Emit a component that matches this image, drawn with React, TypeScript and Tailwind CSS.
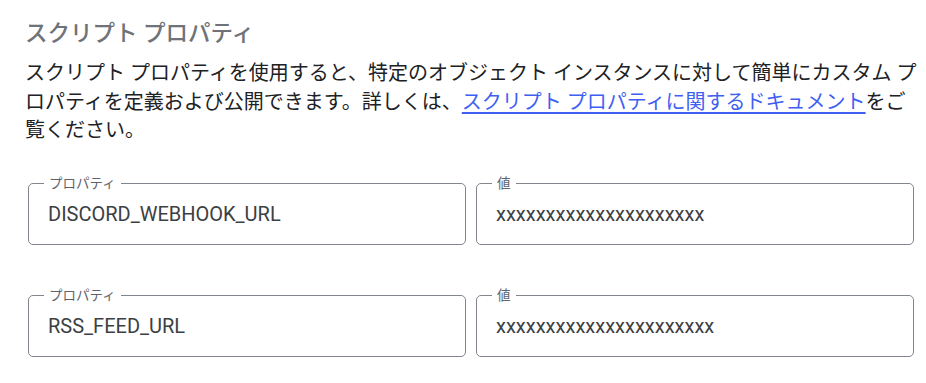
import React from "react";

const rows = [
  { key: "DISCORD_WEBHOOK_URL", value: "xxxxxxxxxxxxxxxxxxxxx" },
  { key: "RSS_FEED_URL", value: "xxxxxxxxxxxxxxxxxxxxxx" },
];

export default function App() {
  return (
    <main
      className="w-[926px] h-[383px] overflow-hidden bg-white pl-[25px] pr-[3px] pt-[17px]"
      style={{ fontFamily: 'Roboto, "Noto Sans CJK JP", sans-serif' }}
    >
      <h2 className="text-[22.5px] leading-[32px] font-medium text-[#6f7378]">スクリプト プロパティ</h2>
      <p className="mt-[10px] text-[20px] leading-[28.5px] text-[#202124]">
        スクリプト プロパティを使用すると、特定のオブジェクト インスタンスに対して簡単にカスタム プロパティを定義および公開できます。詳しくは、
        <a href="#" className="text-[#3f5ff2] underline underline-offset-[3px]">
          スクリプト プロパティに関するドキュメント
        </a>
        をご覧ください。
      </p>

      <div className="mt-[38px] ml-[3px] w-[886px] flex flex-col gap-[50px]">
        {rows.map((r) => (
          <div key={r.key} className="grid grid-cols-2 gap-[10px]">
            <Field label="プロパティ" value={r.key} />
            <Field label="値" value={r.value} />
          </div>
        ))}
      </div>
    </main>
  );
}

function Field({ label, value }: { label: string; value: string }) {
  return (
    <div className="relative h-[62px] rounded-[5px] border border-[#80868b] flex items-center pl-[19px]">
      <span className="absolute -top-[10px] left-[15px] bg-white px-[5px] text-[13.5px] leading-[18px] text-[#5f6368]">
        {label}
      </span>
      <span className="text-[20px] text-[#3c4043]">{value}</span>
    </div>
  );
}
